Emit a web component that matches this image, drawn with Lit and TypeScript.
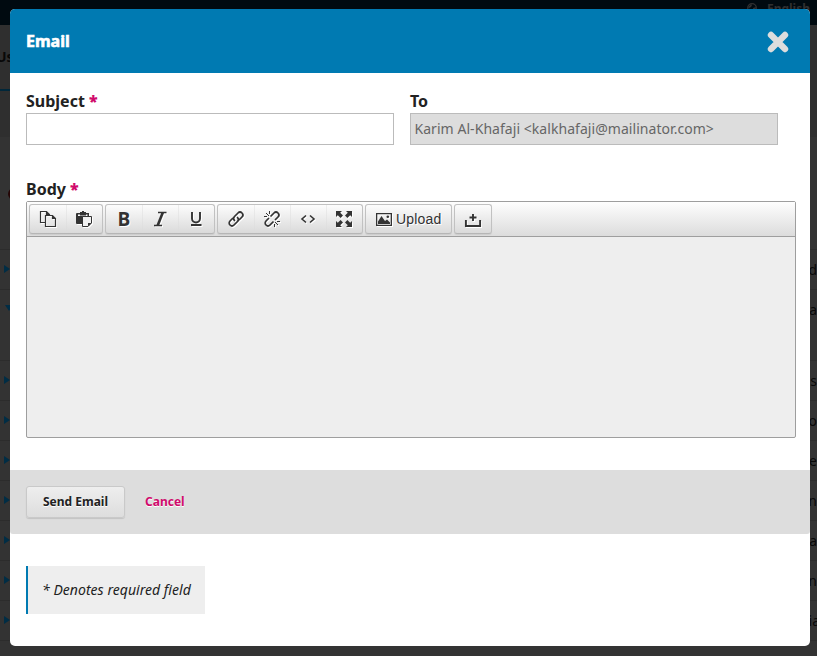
import { LitElement, html, css, svg } from 'lit';
import { customElement, property } from 'lit/decorators.js';

const icons: Record<string, unknown> = {
  copy: svg`<path d="M5 11.500H.5V.5H6.500L9.500 3.500v1M6.500 .5V3.500h3M5.500 4.500H12.500L15.500 7.500V15.500H5.500ZM12.500 4.500V7.500h3" fill="none" stroke="currentColor" stroke-width="1.200"/>`,
  paste: svg`<path d="M1 2h3V1h2V0h2v1h2v1h3v3h-1.500V3.500H10v1H4v-1H2V5H12v1H7v7H1a1 1 0 0 1-1-1V3a1 1 0 0 1 1-1z" fill="currentColor"/><path d="M6.500 5.500h9V12L12 15.500H6.500Z" fill="#f1f1f1" stroke="currentColor"/><path d="M12 15.500V12h3.500z" fill="currentColor"/>`,
  italic: svg`<path d="M6 1.500H14.500M2 14.500H10" stroke="currentColor" stroke-width="1.300"/><path d="M10.800 1.500L5.700 14.500" stroke="currentColor" stroke-width="2.600"/>`,
  underline: svg`<path d="M4 1v6.500a4 4 0 0 0 8 0V1M3 14h10.500" fill="none" stroke="currentColor" stroke-width="1.900"/>`,
  link: svg`<g fill="none" stroke="currentColor" stroke-width="1.700" stroke-linecap="round"><path d="M6.500 9.500C5 8 5.500 6.500 6.500 5.500L10 2a2.700 2.700 0 0 1 4 4L11.500 8.500"/><path d="M9.500 6.500c1.500 1.500 1 3 0 4L6 14a2.700 2.700 0 0 1-4-4L4.500 7.500"/></g>`,
  unlink: svg`<g fill="none" stroke="currentColor" stroke-width="1.700"><path d="M6.500 5.500L10 2a2.700 2.700 0 0 1 4 4L11 9"/><path d="M9.500 10.500L6 14a2.700 2.700 0 0 1-4-4L5 7"/><path d="M2 2l3 3M5.500 0v3M0 5.500h3M11 11l3 3M10.500 13v3M13 10.500h3" stroke-width="1"/></g>`,
  code: svg`<path d="M6 4.500L2 8l4 3.500M10 4.500L14 8l-4 3.500" fill="none" stroke="currentColor" stroke-width="1.600"/>`,
  full: svg`<path d="M0 0h6L4.200 1.800 7 4.600 4.600 7 1.800 4.200 0 6zM16 0v6L14.200 4.200 11.400 7 9 4.600 11.800 1.800 10 0zM0 16v-6l1.800 1.800L4.600 9 7 11.400 4.200 14.200 6 16zM16 16h-6l1.800-1.800L9 11.400 11.400 9l2.800 2.800L16 10z" fill="currentColor"/>`,
  image: svg`<path d="M.65 2.650h14.700v11.700H.65z" fill="none" stroke="currentColor" stroke-width="1.300"/><path d="M2 13V10.500L5.500 5l3.500 5L11 8.500l3 3V13z" fill="currentColor"/><circle cx="11.800" cy="5.800" r="1.300" fill="currentColor"/>`,
  tray: svg`<path d="M.9 9v6h14.200V9M8 3v7M4.500 6.500h7" fill="none" stroke="currentColor" stroke-width="1.900"/>`,
};

@customElement('tool-button')
export class ToolButton extends LitElement {
  @property() icon = '';
  @property() label = '';
  static styles = css`
    :host { display: flex; }
    button { display: flex; align-items: center; justify-content: center; min-width: 36px; height: 28px;
      padding: 0 10px; border: 0; background: none; color: #333;
      font: 14px/20px "Liberation Sans", Arial, sans-serif; text-shadow: 1px 1px #fff; }
    svg { display: block; width: 16px; height: 16px; flex: none; overflow: visible; filter: drop-shadow(1px 1px 0 #fff); }
    .label { margin: 0 0 0 4px; width: 45px; text-align: left; letter-spacing: .2px; }
    .bold { font: bold 19px/20px "Open Sans", "Noto Sans", sans-serif; margin: 0 -2px; }
  `;
  render() {
    return html`<button>
      ${this.icon === 'bold'
        ? html`<span class="bold">B</span>`
        : html`<svg viewBox="0 0 16 16">${icons[this.icon]}</svg>`}
      ${this.label ? html`<span class="label">${this.label}</span>` : ''}
    </button>`;
  }
}

const toolGroups = [['copy', 'paste'], ['bold', 'italic', 'underline'], ['link', 'unlink', 'code', 'full'], ['image'], ['tray']];
const rowEnds = ['d', 'na', 's', 'o', 've', 'n', 'a', 'n', 'ria'];

@customElement('app-root')
export class AppRoot extends LitElement {
  static styles = css`
    * { box-sizing: border-box; }
    :host { display: block; position: relative; width: 817px; height: 656px; overflow: hidden;
      font-family: "Noto Sans", sans-serif; font-size: 14px; line-height: 20px; color: #222; background: #333; }
    .page { height: 100%; overflow: hidden; color: #080808; }
    .topbar { height: 25px; background: #000a10; display: flex; justify-content: flex-end; align-items: flex-start;
      gap: 10px; padding: 0 7px 0 0; color: #303030; font-size: 12px; font-weight: bold; line-height: 17px; }
    .topbar svg { width: 10px; height: 10px; margin-top: 3px; }
    .band { height: 112px; background: #2f2f2f; }
    .tabs { width: 400px; height: 66px; border-bottom: 2px solid #00273a;
      white-space: nowrap; font-size: 14px; font-weight: bold; line-height: 64px; }
    .tabs span { margin-left: -4px; }
    .head { display: flex; height: 112px; align-items: center; }
    .mark { width: 8px; height: 12px; margin: 2px 0 0 8px; border-radius: 6px 0 0 6px; background: #250606; }
    .row { height: 40px; border-top: 1px solid #2c2c2c; display: flex; justify-content: space-between; padding: 10px 0 0 4px; }
    .row.tall { height: 71px; }
    .row i { width: 0; height: 0; margin-top: 5px; border: 4px solid transparent; border-left: 6px solid #002d45; border-right: 0; }
    .row.tall i { margin-left: 1px; border: 4px solid transparent; border-top: 6px solid #002d45; border-bottom: 0; }
    .row span { white-space: nowrap; }
    .row:last-of-type span { margin-right: -3px; }
    .row.over span { margin-right: -3px; }
    .next { display: grid; grid-template-columns: 265px 211px 233px 1fr; padding: 13px 0 0 26px; white-space: nowrap; border-top: 1px solid #2c2c2c; }

    .modal { position: absolute; left: 10px; top: 9px; width: 800px; height: 637px; background: #fff;
      border-radius: 5px; overflow: hidden; }
    header { height: 64px; padding: 0 21px 0 16px; background: #007ab2; color: #fff; display: flex;
      align-items: center; justify-content: space-between; font-size: 16px; font-weight: bold; }
    h1 { font-size: 16px; line-height: 24px; margin: 0; -webkit-text-stroke: .6px #fff; }
    header svg { width: 22px; height: 22px; margin-top: 1px; }
    .form { padding: 16px 14px 32px 16px; }
    .fields { display: flex; gap: 16px; height: 88px; }
    .field { width: 368px; }
    label { display: block; font-size: 16px; line-height: 24px; font-weight: bold; color: #222; }
    label b { color: #d00a6c; }
    input { display: block; width: 368px; height: 32px; border: 1px solid #bbb; padding: 0 4px 2px 3.500px; background: #fff;
      font: 14px/20px "Noto Sans", sans-serif; letter-spacing: .05px; color: #666; outline: 0; border-radius: 0; }
    input[readonly] { background: #ddd; }
    .editor { height: 237px; border: 1px solid #9e9e9e; border-radius: 2px; background: #eee; }
    .toolbar { height: 35px; border-bottom: 1px solid #9e9e9e; padding: 2px; display: flex; gap: 2px;
      background: linear-gradient(#fefefe, #dcdcdc); }
    .group { display: flex; height: 30px; border: 1px solid #c1c1c1; border-bottom-color: #b6b6b6; border-radius: 3px;
      background: linear-gradient(#fcfcfc, #dadada); box-shadow: 0 1px 1px rgba(0,0,0,.08); }
    .group tool-button + tool-button { box-shadow: inset 1px 0 rgba(220,220,220,.45); }
    .actions { height: 64px; background: #ddd; display: flex; align-items: center; padding-left: 16px; gap: 20px;
      font-size: 12px; font-weight: bold; border-radius: 0 0 3px 3px; }
    .send { width: 99px; height: 32px; padding: 0; border: 1px solid #c9c9c9; border-radius: 3px; color: #222;
      background: linear-gradient(#eee, #ddd); box-shadow: 0 1px 1px rgba(0,0,0,.12);
      font: bold 12px/30px "Noto Sans", sans-serif; text-shadow: 0 1px #fff; }
    .cancel { color: #d00a6c; text-shadow: 0 1px #fff; }
    .note { width: 179px; height: 48px; margin: 32px 0 0 16px; border-left: 2px solid #007ab2; background: #eee;
      padding-left: 14px; line-height: 48px; font-style: italic; letter-spacing: .04px; white-space: nowrap; }
  `;

  render() {
    return html`
      <div class="page">
        <div class="topbar">
          <svg viewBox="0 0 10 10"><circle cx="5" cy="5" r="4.300" fill="none" stroke="currentColor" stroke-width="1.300"/><path d="M1 4l3-3 1 1-1 2-2 1 1 2zM6 5l3-1-1 3-2 1z" fill="currentColor"/></svg>
          <span>English</span>
        </div>
        <div class="band"><div class="tabs"><span>Us</span></div></div>
        <div class="head"><div class="mark"></div></div>
        ${rowEnds.map((t, n) => html`<div class="row ${n === 1 ? 'tall' : ''} ${t === 'ria' ? 'over' : ''}"><i></i><span>${t}</span></div>`)}
        <div class="next"><span>Freddie</span><span>Patricia</span><span>mailinator</span><span>editor</span></div>
      </div>
      <div class="modal">
        <header>
          <h1>Email</h1>
          <svg viewBox="0 0 22 22"><path d="M4 4l14 14M18 4L4 18" stroke="#ddd" stroke-width="6.400" stroke-linecap="round"/></svg>
        </header>
        <div class="form">
          <div class="fields">
            <div class="field"><label>Subject <b>*</b></label><input></div>
            <div class="field"><label>To</label><input readonly .value=${'Karim Al-Khafaji <kalkhafaji@mailinator.com>'}></div>
          </div>
          <label>Body <b>*</b></label>
          <div class="editor">
            <div class="toolbar">
              ${toolGroups.map(g => html`<div class="group">${g.map(i => html`<tool-button .icon=${i} .label=${i === 'image' ? 'Upload' : ''}></tool-button>`)}</div>`)}
            </div>
          </div>
        </div>
        <div class="actions"><button class="send">Send Email</button><span class="cancel">Cancel</span></div>
        <div class="note">* Denotes required field</div>
      </div>
    `;
  }
}
